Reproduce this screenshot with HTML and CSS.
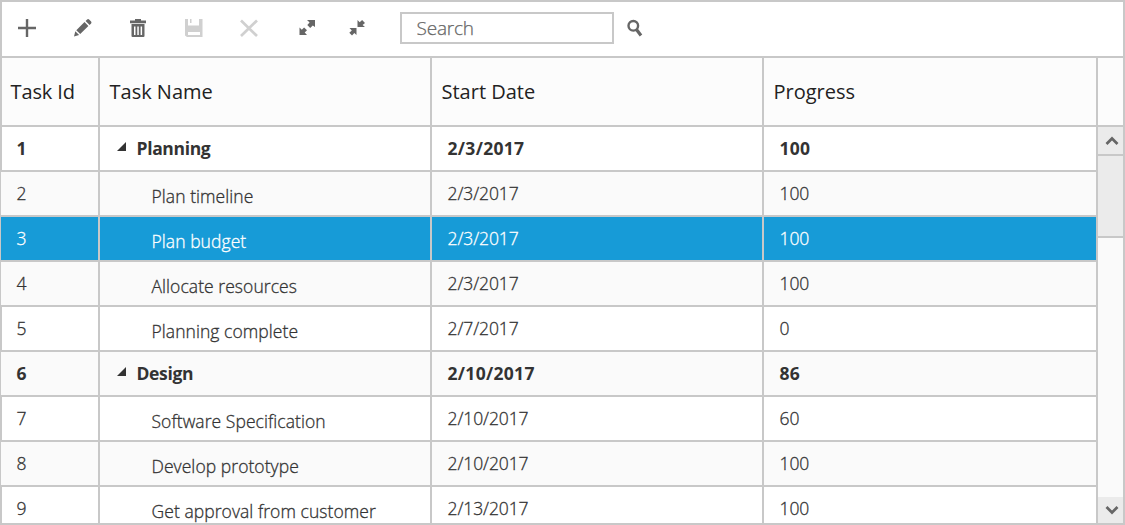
FILE: index.html
```html
<!DOCTYPE html>
<html lang="en">
<head>
<meta charset="utf-8">
<title>Tree Grid</title>
<link rel="stylesheet" href="styles.css">
</head>
<body>
<div class="treegrid">
  <div class="toolbar">
    <svg class="icon" viewBox="0 0 20 20"><path d="M8.800 1h2.400v7.800h7.800v2.400h-7.800v7.800H8.800v-7.800H1V8.800h7.800z"/></svg>
    <svg class="icon" viewBox="0 0 20 20"><path d="M1 18.500l1.300-5.200 3.800 3.800zM3.300 12.200l8.200-8.100 3.900 3.900-8.200 8.100zM12.600 3l1.500-1.500q1-.8 2 0l2 2q.8 1 0 2L16.600 7z"/></svg>
    <svg class="icon" viewBox="0 0 20 20"><path fill-rule="evenodd" d="M7 1h6v1.500h5v2.800H2V2.500h5zM3.500 6h13v12q0 1-1 1h-11q-1 0-1-1zM6 8.500V17h1.500V8.500zM9.300 8.500V17h1.500V8.500zM12.600 8.500V17h1.500V8.500z"/></svg>
    <svg class="icon disabled" viewBox="0 0 20 20"><path fill-rule="evenodd" d="M1 1h3v6.500h11V1h3.500v18H3l-2-1.500zM4 14v3h12v-3zM6 1h1.500v4H6z"/></svg>
    <svg class="icon disabled" viewBox="0 0 20 20"><path d="M2 2.500l16 15.500M18 2.500L2 18" fill="none" stroke="currentColor" stroke-width="2.700"/></svg>
    <svg class="icon expand" viewBox="0 0 20 20"><path d="M10 2h8v7l-2.200-1.600-2.600 2.600-2.900-2.900L12.600 4.500zM2.500 9.500l2.300 2.200 2.300-2.300 2.900 2.900L7.700 14.600 10 17H2.500z"/></svg>
    <svg class="icon collapse" viewBox="0 0 20 20"><path d="M10.500 2l2.200 2.200L15.100 2l2.900 2.900-2.400 2.200 2.400 1.900h-7.500zM2.500 10h7v7l-2.200-1.900L5 17.500 2.300 14.800l2.500-2.300z"/></svg>
    <input class="search" type="text" placeholder="Search">
    <svg class="icon find" viewBox="0 0 20 20"><circle cx="8.300" cy="7.800" r="4.800" fill="none" stroke="currentColor" stroke-width="2.400"/><path d="M11.500 11.500l4.500 6" stroke="currentColor" stroke-width="3.200"/></svg>
  </div>
  <div class="grid">
    <div class="row header"><div>Task Id</div><div>Task Name</div><div>Start Date</div><div>Progress</div></div>
    <div class="row parent"><div>1</div><div class="name"><svg class="twisty" viewBox="0 0 9 9"><path d="M9 0v9H0z"/></svg>Planning</div><div>2/3/2017</div><div>100</div></div>
    <div class="row alt"><div>2</div><div class="name">Plan timeline</div><div>2/3/2017</div><div>100</div></div>
    <div class="row selected"><div>3</div><div class="name">Plan budget</div><div>2/3/2017</div><div>100</div></div>
    <div class="row alt"><div>4</div><div class="name">Allocate resources</div><div>2/3/2017</div><div>100</div></div>
    <div class="row"><div>5</div><div class="name">Planning complete</div><div>2/7/2017</div><div>0</div></div>
    <div class="row parent alt"><div>6</div><div class="name"><svg class="twisty" viewBox="0 0 9 9"><path d="M9 0v9H0z"/></svg>Design</div><div>2/10/2017</div><div>86</div></div>
    <div class="row"><div>7</div><div class="name">Software Specification</div><div>2/10/2017</div><div>60</div></div>
    <div class="row alt"><div>8</div><div class="name">Develop prototype</div><div>2/10/2017</div><div>100</div></div>
    <div class="row"><div>9</div><div class="name">Get approval from customer</div><div>2/13/2017</div><div>100</div></div>
  </div>
  <div class="scrollbar">
    <div class="corner"></div>
    <div class="arrow up"><svg viewBox="0 0 14 10"><path d="M1.500 8L7 2.500 12.500 8"/></svg></div>
    <div class="thumb"></div>
    <div class="track"></div>
    <div class="arrow"><svg viewBox="0 0 14 10"><path d="M1.500 2L7 7.500 12.500 2"/></svg></div>
  </div>
</div>
</body>
</html>
```
FILE: styles.css
```css
* { box-sizing: border-box; }
body { margin: 0; font-family: "Open Sans", "Noto Sans", sans-serif; color: #333; }
.treegrid {
  width: 1125px; height: 525px;
  border: 2px solid #c8c8c8; background: #fff;
  display: grid; grid-template: 56px 465px / 1096px 25px;
}
.toolbar {
  grid-column: 1 / 3; border-bottom: 2px solid #c8c8c8;
  display: flex; align-items: center; padding: 0 0 2px 15px;
}
.icon { width: 20px; height: 20px; margin-right: 35.500px; color: #666; fill: currentColor; flex: none; }
.icon.disabled { color: #d0d0d0; }
.icon.expand { margin: 0 29.500px 0 2.500px; }
.icon.collapse { margin-right: 33px; }
.search {
  width: 214px; height: 32px; border: 2px solid #c8c8c8; border-radius: 0; padding: 0 0 0 15px;
  font: 300 19px "Open Sans", sans-serif; letter-spacing: -.2px; margin: 0 11.500px 0 0; outline: 0;
}
.search::placeholder { color: #666; opacity: 1; -webkit-text-stroke: .25px #666; }
.grid { margin-left: -2px; overflow: hidden; background: #fff; }
.row {
  display: grid; grid-template-columns: 100px 332px 332px 334px; height: 45px;
  font-size: 17.500px; font-weight: 300; letter-spacing: -.1px; -webkit-text-stroke: .3px currentColor;
}
.row > div {
  border-right: 2px solid #c8c8c8; border-bottom: 2px solid #c8c8c8;
  padding: 0 0 1px 15.500px; display: flex; align-items: center; white-space: nowrap;
}
.row > div:first-child { border-left: 2px solid #c8c8c8; padding-left: 14.500px; }
.row.alt > div:first-child, .row.selected > div:first-child { border-left-width: 1px; padding-left: 15.500px; }
.row .name { padding: 5px 0 0 51.500px; letter-spacing: .06px; }
.alt { background: #fafafa; }
.row.selected { background: #179bd7; color: #fff; }
.row.header, .row.parent { -webkit-text-stroke: 0; }
.row.header { height: 69px; background: #fcfcfc; font-size: 20px; font-weight: 400; letter-spacing: 0; color: #222; }
.row.header > div { padding-left: 9.500px; }
.row.header > div:first-child { padding-left: 8.500px; letter-spacing: -.1px; }
.row.parent { font-weight: 700; letter-spacing: .3px; }
.row.parent .name { padding: 0 0 1px 17px; letter-spacing: -.35px; }
.twisty { width: 9px; height: 9px; margin: 0 10.500px 4px 0; fill: #333; }
.scrollbar { display: flex; flex-direction: column; background: #fafafa; }
.corner { height: 69px; border-bottom: 2px solid #c8c8c8; background: #fcfcfc; }
.arrow { height: 26px; background: #ebebeb; display: flex; align-items: center; justify-content: center; padding-left: 2px; }
.arrow.up { height: 29px; border-bottom: 2px solid #c8c8c8; }
.arrow svg { width: 14px; height: 10px; fill: none; stroke: #666; stroke-width: 2.700; }
.thumb { height: 82px; background: #ebebeb; border-bottom: 2px solid #c8c8c8; }
.track { flex: 1; }
```
